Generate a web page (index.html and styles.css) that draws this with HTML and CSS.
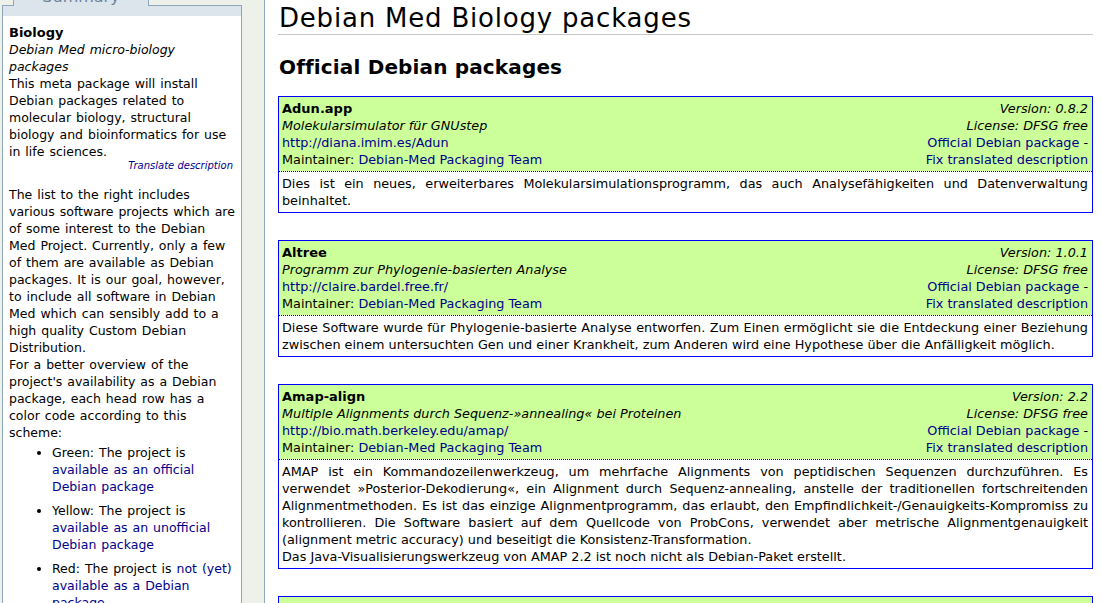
FILE: index.html
```html
<!DOCTYPE html>
<html lang="en">
<head>
    <meta charset="UTF-8">
    <title>Debian Med Biology packages</title>
    <link rel="stylesheet" href="styles.css">
</head>
<body>
<div class="page">
    <!-- Linke Spalte: Zusammenfassung -->
    <div class="sidebar">
        <div class="tabs">
            <div class="tab">Summary</div>
        </div>
        <div class="band"></div>
        <div class="panel">
            <div class="task-name">Biology</div>
            <div class="task-short">Debian Med micro-biology packages</div>
            <div>This meta package will install Debian packages related to molecular biology, structural biology and bioinformatics for use in life sciences.</div>
            <div class="translate"><a href="#">Translate description</a></div>

            <p>The list to the right includes various software projects which are of some interest to the Debian Med Project. Currently, only a few of them are available as Debian packages. It is our goal, however, to include all software in Debian Med which can sensibly add to a high quality Custom Debian Distribution.<br>
            For a better overview of the project's availability as a Debian package, each head row has a color code according to this scheme:</p>
            <ul>
                <li>Green: The project is <a href="#">available as an official Debian package</a></li>
                <li>Yellow: The project is <a href="#">available as an unofficial Debian package</a></li>
                <li>Red: The project is <a href="#">not (yet) available as a Debian package</a></li>
            </ul>
        </div>
    </div>

    <!-- Rechte Spalte: Paketliste -->
    <div class="main">
        <h1>Debian Med Biology packages</h1>
        <h2>Official Debian packages</h2>

        <div class="pkg">
            <div class="pkg-head">
                <div class="pkg-left">
                    <div class="pkg-name">Adun.app</div>
                    <div class="pkg-short">Molekularsimulator für GNUstep</div>
                    <div><a href="#">http://diana.imim.es/Adun</a></div>
                    <div>Maintainer: <a href="#">Debian-Med Packaging Team</a></div>
                </div>
                <div class="pkg-right">
                    <div class="pkg-meta">Version: 0.8.2</div>
                    <div class="pkg-meta">License: DFSG free</div>
                    <div><a href="#">Official Debian package</a> -</div>
                    <div><a href="#">Fix translated description</a></div>
                </div>
            </div>
            <div class="pkg-desc">Dies ist ein neues, erweiterbares Molekularsimulationsprogramm, das auch Analysefähigkeiten und Datenverwaltung beinhaltet.</div>
        </div>

        <div class="pkg">
            <div class="pkg-head">
                <div class="pkg-left">
                    <div class="pkg-name">Altree</div>
                    <div class="pkg-short">Programm zur Phylogenie-basierten Analyse</div>
                    <div><a href="#">http://claire.bardel.free.fr/</a></div>
                    <div>Maintainer: <a href="#">Debian-Med Packaging Team</a></div>
                </div>
                <div class="pkg-right">
                    <div class="pkg-meta">Version: 1.0.1</div>
                    <div class="pkg-meta">License: DFSG free</div>
                    <div><a href="#">Official Debian package</a> -</div>
                    <div><a href="#">Fix translated description</a></div>
                </div>
            </div>
            <div class="pkg-desc">Diese Software wurde für Phylogenie-basierte Analyse entworfen. Zum Einen ermöglicht sie die Entdeckung einer Beziehung zwischen einem untersuchten Gen und einer Krankheit, zum Anderen wird eine Hypothese über die Anfälligkeit möglich.</div>
        </div>

        <div class="pkg">
            <div class="pkg-head">
                <div class="pkg-left">
                    <div class="pkg-name">Amap-align</div>
                    <div class="pkg-short">Multiple Alignments durch Sequenz-»annealing« bei Proteinen</div>
                    <div><a href="#">http://bio.math.berkeley.edu/amap/</a></div>
                    <div>Maintainer: <a href="#">Debian-Med Packaging Team</a></div>
                </div>
                <div class="pkg-right">
                    <div class="pkg-meta">Version: 2.2</div>
                    <div class="pkg-meta">License: DFSG free</div>
                    <div><a href="#">Official Debian package</a> -</div>
                    <div><a href="#">Fix translated description</a></div>
                </div>
            </div>
            <div class="pkg-desc">AMAP ist ein Kommandozeilenwerkzeug, um mehrfache Alignments von peptidischen Sequenzen durchzuführen. Es verwendet »Posterior-Dekodierung«, ein Alignment durch Sequenz-annealing, anstelle der traditionellen fortschreitenden Alignmentmethoden. Es ist das einzige Alignmentprogramm, das erlaubt, den Empfindlichkeit-/Genauigkeits-Kompromiss zu kontrollieren. Die Software basiert auf dem Quellcode von ProbCons, verwendet aber metrische Alignmentgenauigkeit (alignment metric accuracy) und beseitigt die Konsistenz-Transformation.<br>
            Das Java-Visualisierungswerkzeug von AMAP 2.2 ist noch nicht als Debian-Paket erstellt.</div>
        </div>

        <div class="pkg">
            <div class="pkg-head">
                <div class="pkg-left">
                    <div class="pkg-name">Arb</div>
                    <div class="pkg-short">Programmpaket zur phylogenetischen Sequenzanalyse</div>
                </div>
                <div class="pkg-right">
                    <div class="pkg-meta">Version: 5.1</div>
                </div>
            </div>
        </div>
    </div>
</div>
</body>
</html>
```

FILE: styles.css
```css
body {
    margin: 0;
    background-color: #edf1ea; /* Hintergrund zwischen den Spalten */
    font-family: "DejaVu Sans", Verdana, sans-serif;
    font-size: 12.8px;
    line-height: 17px;
    color: #000;
    overflow: hidden;
}

a {
    color: #00008b;
    text-decoration: none;
}

.page {
    display: flex;
    align-items: flex-start;
}

/* Seitenleiste */
.sidebar {
    width: 240px;
    margin-left: 2px;
    margin-top: -20px; /* Seite ist etwas nach unten gescrollt */
    flex-shrink: 0;
    font-size: 12.5px;
    word-spacing: 1px;
}

.tabs {
    display: flex;
    padding-left: 11px;
}

.tab {
    position: relative;
    z-index: 1;
    box-sizing: border-box;
    width: 136px;
    height: 26px;
    margin-bottom: -1px;
    padding-top: 7px;
    border: 1px solid #8ca6ba;
    border-bottom: none;
    background-color: #dce4ec;
    color: #6a8499;
    font-size: 16px;
    line-height: 18px;
    word-spacing: 0;
    text-align: center;
}

.band {
    height: 10px;
    border: 1px solid #8ca6ba;
    border-bottom: none;
    background-color: #dce4ec;
}

.panel {
    background-color: #fff;
    border-left: 1px solid #8ca6ba;
    border-right: 1px solid #8ca6ba;
    padding: 8px 5.2px 40px 6px;
}

.task-name {
    font-weight: bold;
    font-size: 13px;
}

.task-short {
    font-style: italic;
}

.translate {
    text-align: right;
    font-size: 10px;
    line-height: 12px;
    font-style: italic;
    word-spacing: 0;
    margin: 0 2.8px 14px 0;
}

.panel p {
    margin: 0;
}

.panel ul {
    margin: 3px 0 0 0;
    padding-left: 43px;
}

.panel li {
    margin-bottom: 7px;
}

/* Hauptbereich */
.main {
    flex: 1;
    margin-left: 22px;
    min-height: 700px;
    background-color: #fff;
    border-left: 1px solid #8ca6ba;
    padding: 3px 8px 0 13px;
}

h1 {
    margin: 0;
    padding: 0 0 1px 1px;
    font-size: 26px;
    font-weight: normal;
    letter-spacing: 0.8px;
    line-height: 30px;
    border-bottom: 1px solid #c8c8c8;
}

h2 {
    margin: 20px 0 17px 1px;
    font-size: 20px;
    letter-spacing: 0.15px;
    line-height: 24px;
}

.pkg {
    border: 1px solid #0000ff;
    margin-bottom: 27px;
}

.pkg-head {
    display: flex;
    justify-content: space-between;
    background-color: #ccff99;
    padding: 3px 4px 3px 3px;
}

.pkg-right {
    text-align: right;
}

.pkg-name {
    font-weight: bold;
    font-size: 13px;
}

.pkg-short,
.pkg-meta {
    font-style: italic;
}

.pkg-desc {
    border-top: 1px dotted #000080;
    padding: 3px 4px 3px 3px;
    text-align: justify;
}
```
